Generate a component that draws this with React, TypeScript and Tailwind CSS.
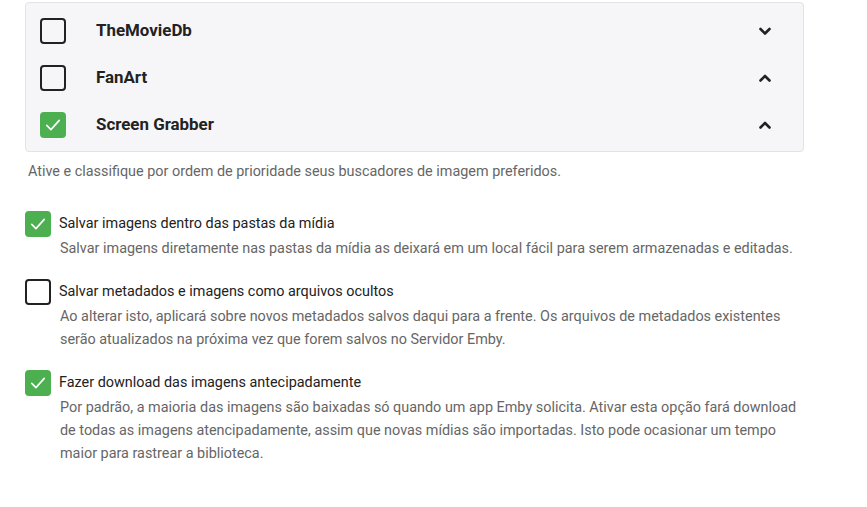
import React from 'react';

const providers = [
  { name: 'TheMovieDb', checked: false, up: false },
  { name: 'FanArt', checked: false, up: true },
  { name: 'Screen Grabber', checked: true, up: true },
];

const options = [
  {
    label: 'Salvar imagens dentro das pastas da mídia',
    checked: true,
    desc: 'Salvar imagens diretamente nas pastas da mídia as deixará em um local fácil para serem armazenadas e editadas.',
  },
  {
    label: 'Salvar metadados e imagens como arquivos ocultos',
    checked: false,
    desc: 'Ao alterar isto, aplicará sobre novos metadados salvos daqui para a frente. Os arquivos de metadados existentes serão atualizados na próxima vez que forem salvos no Servidor Emby.',
  },
  {
    label: 'Fazer download das imagens antecipadamente',
    checked: true,
    desc: 'Por padrão, a maioria das imagens são baixadas só quando um app Emby solicita. Ativar esta opção fará download de todas as imagens atencipadamente, assim que novas mídias são importadas. Isto pode ocasionar um tempo maior para rastrear a biblioteca.',
  },
];

const Box = ({ checked }: { checked: boolean }) =>
  checked ? (
    <div className="w-[26px] h-[26px] shrink-0 rounded-[4px] bg-[#4caf50] flex items-center justify-center">
      <svg width="20" height="20" viewBox="0 0 24 24" fill="none" stroke="white" strokeWidth="2" strokeLinecap="round" strokeLinejoin="round">
        <polyline points="4.5,12.5 9.5,17.5 19.5,6.5" />
      </svg>
    </div>
  ) : (
    <div className="w-[26px] h-[26px] shrink-0 rounded-[4px] border-2 border-[#222]" />
  );

const Chevron = ({ up }: { up: boolean }) => (
  <svg width="24" height="24" viewBox="0 0 24 24" fill="none" stroke="#222" strokeWidth="2.6" strokeLinecap="round" strokeLinejoin="round">
    {up ? <polyline points="7.5,14.5 12,10 16.5,14.5" /> : <polyline points="7.5,10 12,14.5 16.5,10" />}
  </svg>
);

export default function App() {
  return (
    <div className="w-[867px] h-[507px] bg-white overflow-hidden pl-[25px] pt-[2px]" style={{ fontFamily: 'Roboto, sans-serif' }}>
      <div className="w-[779px] border border-[#e3e3e6] bg-[#f6f6f8] rounded-[4px] pt-[4px] pb-[3px]">
        {providers.map((p) => (
          <div key={p.name} className="h-[47px] flex items-center pl-[14px] pr-[26px]">
            <Box checked={p.checked} />
            <span className="ml-[30px] flex-1 text-[16.9px] font-bold text-[#222]">{p.name}</span>
            <Chevron up={p.up} />
          </div>
        ))}
      </div>
      <p className="mt-[10px] pl-[3px] text-[14.4px] leading-[20px] text-[#666]">
        Ative e classifique por ordem de prioridade seus buscadores de imagem preferidos.
      </p>
      <div className="mt-[29px] flex flex-col gap-[19px]">
        {options.map((o) => (
          <div key={o.label}>
            <div className="flex items-center h-[26px]">
              <Box checked={o.checked} />
              <span className="ml-[8px] text-[14.4px] text-[#222]">{o.label}</span>
            </div>
            <p className="pl-[35px] w-[780px] text-[14.4px] leading-[23px] text-[#666]">{o.desc}</p>
          </div>
        ))}
      </div>
    </div>
  );
}
